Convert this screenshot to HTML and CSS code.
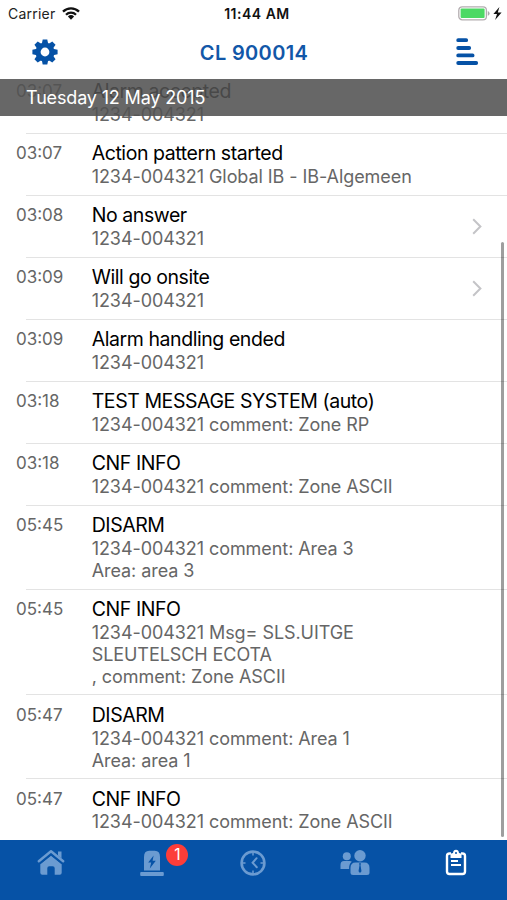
FILE: index.html
```html
<!DOCTYPE html>
<html lang="en">
<head>
<meta charset="utf-8">
<title>CL 900014</title>
<link rel="stylesheet" href="styles.css">
</head>
<body>
<header class="top">
  <div class="status">
    <div class="carrier"><span>Carrier</span>
      <svg class="wifi" width="18" height="13" viewBox="0 0 18 13"><g fill="none" stroke="#111" stroke-width="2.3"><path d="M1 4.6a11.4 11.4 0 0 1 16 0M4 7.7a7.1 7.1 0 0 1 10 0"/></g><path fill="#111" d="M9 12.8 5.9 9.5a4.6 4.6 0 0 1 6.2 0z"/></svg>
    </div>
    <div class="clock">11:44 AM</div>
    <div class="power">
      <svg width="46" height="15" viewBox="0 0 46 15"><rect x=".8" y=".8" width="27.6" height="13" rx="3.4" fill="#fff" stroke="#b3adb0" stroke-width="1.3"/><rect x="2.6" y="2.6" width="24" height="9.4" rx="1" fill="#4cd964"/><path d="M29.8 5q1.8.6 1.8 2.4t-1.8 2.4z" fill="#aaa"/><path d="M41.4 1 35.4 8h3.6l-1.9 6L43.6 6.5h-3.8z" fill="#111"/></svg>
    </div>
  </div>
  <nav class="bar">
    <svg class="gear" width="26" height="26" viewBox="-13 -13 26 26"><g fill="#0652a6"><g id="t"><path id="a" d="M-3.2-8-2.3-12.6h4.6L3.2-8v16L2.3 12.6h-4.6L-3.2 8z"/><use href="#a" transform="rotate(90)"/></g><use href="#t" transform="rotate(45)"/><circle r="9.5"/></g><circle r="4.4" fill="#fff"/></svg>
    <h1>CL 900014</h1>
    <svg class="sort" width="24" height="28" viewBox="0 0 24 28"><path d="M3.2 2.2h8M3.2 10h11M3.2 17.4h14.4M3.2 25h18" stroke="#0652a6" stroke-width="3.8" stroke-linecap="round"/></svg>
  </nav>
</header>
<main class="log">
  <h2 class="day">Tuesday 12 May 2015</h2>
  <ul class="events">
    <li><time>03:07</time><div class="entry"><h3>Alarm accepted</h3><p>1234-004321</p></div></li>
    <li><time>03:07</time><div class="entry"><h3>Action pattern started</h3><p>1234-004321 Global IB - IB-Algemeen</p></div></li>
    <li><time>03:08</time><div class="entry"><h3>No answer</h3><p>1234-004321</p></div><svg class="chevron" width="10" height="17" viewBox="0 0 10 17"><path d="m1.2 1.2 7.2 7.3-7.2 7.3"/></svg></li>
    <li><time>03:09</time><div class="entry"><h3>Will go onsite</h3><p>1234-004321</p></div><svg class="chevron" width="10" height="17" viewBox="0 0 10 17"><path d="m1.2 1.2 7.2 7.3-7.2 7.3"/></svg></li>
    <li><time>03:09</time><div class="entry"><h3>Alarm handling ended</h3><p>1234-004321</p></div></li>
    <li><time>03:18</time><div class="entry"><h3>TEST MESSAGE SYSTEM (auto)</h3><p>1234-004321 comment: Zone RP</p></div></li>
    <li><time>03:18</time><div class="entry"><h3>CNF INFO</h3><p>1234-004321 comment: Zone ASCII</p></div></li>
    <li><time>05:45</time><div class="entry"><h3>DISARM</h3><p>1234-004321 comment: Area 3<br>Area: area 3</p></div></li>
    <li><time>05:45</time><div class="entry"><h3>CNF INFO</h3><p>1234-004321 Msg= SLS.UITGE<br>SLEUTELSCH ECOTA<br>, comment: Zone ASCII</p></div></li>
    <li><time>05:47</time><div class="entry"><h3>DISARM</h3><p>1234-004321 comment: Area 1<br>Area: area 1</p></div></li>
    <li><time>05:47</time><div class="entry"><h3>CNF INFO</h3><p>1234-004321 comment: Zone ASCII</p></div></li>
  </ul>
  <div class="scrollbar"></div>
</main>
<footer class="tabs">
  <div class="tab"><svg width="30" height="28" viewBox="0 0 30 28"><path d="M2.800 13.200 15 3.200l12.200 10" fill="none" stroke="currentColor" stroke-width="2.500" stroke-linecap="round" stroke-linejoin="round"/><path fill="currentColor" d="M22 3.400h3.500v7L22 7.500zM4.300 16.200 15 7.800l10.700 8.400v8.600q0 2-2 2h-5v-6.600q0-2-2-2h-3.400q-2 0-2 2v6.600h-5q-2 0-2-2z"/><path d="M4.300 15.300 15 6.600l10.700 8.700" fill="none" stroke="#0652a6" stroke-width="1.300"/></svg></div>
  <div class="tab"><svg width="30" height="28" viewBox="0 0 30 28"><path fill="currentColor" d="M7 22.6V9q0-6.2 5.2-6.2h5.6Q23 2.8 23 9v13.6z"/><rect x="3.2" y="24" width="23.6" height="4" rx="1" fill="currentColor"/><path fill="#0652a6" d="M16.6 7.5 11.2 14.4h3l-1.4 6.2 6-7.8h-3.2z"/></svg><span class="badge">1</span></div>
  <div class="tab"><svg width="30" height="28" viewBox="0 0 30 28"><g fill="none" stroke="currentColor"><circle cx="15" cy="15" r="11.4" stroke-width="2.6"/><path stroke-width="1.5" d="M15 4v3.5M15 22.5V26M4 15h3.5M22.5 15H26"/><path stroke-width="2" stroke-linecap="round" d="m18.6 10.2-4 4.6 4.2 4.4"/></g></svg></div>
  <div class="tab"><svg width="30" height="28" viewBox="0 0 30 28"><g fill="currentColor"><circle cx="6.8" cy="8.2" r="4"/><path d="M.5 21v-4q0-4 3.5-4h5.6q1.6 0 2.2.8-3 2.2-2.7 7.2z"/><circle cx="20" cy="7.8" r="5.7"/><path d="M10.5 24.5v-4.5q0-5.5 5-5.5h9q5 0 5 5.5v4.5q0 2.5-2.5 2.500H13q-2.500 0-2.500-2.500z"/></g><path fill="#0652a6" d="M19 15.200h2l-.5 2 1 6L20 25l-1.500-1.800 1-6z"/></svg></div>
  <div class="tab active"><svg width="30" height="28" viewBox="0 0 30 28"><path d="M10 5.500H8.500Q6 5.500 6 8v15.500Q6 26 8.500 26h13q2.500 0 2.500-2.500V8q0-2.500-2.500-2.500H20" fill="none" stroke="currentColor" stroke-width="2.400"/><path fill="currentColor" d="M9.500 10V7q0-2 2.500-2 .4-3.200 3-3.200T18 5q2.500 0 2.500 2v3z"/><circle cx="15" cy="5" r="1" fill="#0652a6"/><path d="M10 13h7M10 17h10" stroke="currentColor" stroke-width="1.800"/></svg></div>
</footer>
</body>
</html>
```
FILE: styles.css
```css
* { box-sizing: border-box; }
body {
  margin: 0;
  height: 900px;
  display: flex;
  flex-direction: column;
  overflow: hidden;
  background: #fff;
  font-family: Inter, "Liberation Sans", sans-serif;
}
h1, h2, h3, p, ul { margin: 0; padding: 0; font-weight: 400; }
svg { display: block; }
.top { height: 79px; flex: none; }
.status {
  height: 27px;
  display: grid;
  grid-template-columns: 1fr auto 1fr;
  align-items: center;
  padding: 0 3px 0 8px;
  font-size: 14px;
  color: #222;
}
.carrier { display: flex; align-items: center; gap: 7px; letter-spacing: .22px; }
.clock { font-weight: 600; color: #111; font-size: 14px; letter-spacing: .5px; position: relative; left: 1px; }
.power { justify-self: end; }
.bar {
  height: 50px;
  display: grid;
  grid-template-columns: 1fr auto 1fr;
  align-items: center;
  padding: 0 32px 0 32px;
}
.bar h1 { font-size: 20px; font-weight: 600; color: #1257a8; letter-spacing: .35px; padding: 1px 0 0 1px; }
.gear { margin-left: -.5px; }
.sort { justify-self: end; margin-right: -4px; }
.log { flex: 1; min-height: 0; overflow: hidden; position: relative; }
.day {
  position: relative;
  z-index: 1;
  height: 36.5px;
  padding-left: 26px;
  background: rgba(82, 82, 82, .88);
  color: #fff;
  font-size: 18px;
  line-height: 38px;
  letter-spacing: -.16px;
}
.events { list-style: none; margin-top: -44.4px; }
.events li { display: flex; position: relative; padding: 8.35px 25px 6.85px 16px; }
.events li + li::before {
  content: "";
  position: absolute;
  top: 0;
  left: 26px;
  right: 0;
  height: 1px;
  background: #e3e3e3;
}
time { width: 75.7px; flex: none; font-size: 17px; line-height: 25px; color: #666; }
.entry { flex: 1; }
.entry h3 { font-size: 19.5px; line-height: 24px; color: #000; margin-bottom: .8px; white-space: nowrap; letter-spacing: -.43px; }
.entry p { font-size: 18px; line-height: 21.95px; color: #666; white-space: nowrap; letter-spacing: -.07px; }
.chevron { align-self: center; fill: none; stroke: #c4c4c7; stroke-width: 2; }
.scrollbar {
  position: absolute;
  right: 3px;
  top: 163px;
  bottom: 3px;
  width: 3.5px;
  border-radius: 2px;
  background: rgba(0, 0, 0, .38);
}
.tabs {
  height: 60px;
  flex: none;
  display: grid;
  grid-template-columns: repeat(5, 1fr);
  background: #0652a6;
  color: #6b9bd1;
}
.tab { position: relative; display: flex; justify-content: center; align-items: flex-start; padding-top: 8px; }
.active { color: #fff; }
.badge {
  position: absolute;
  left: 65px;
  top: 4px;
  width: 22px;
  height: 22px;
  border-radius: 50%;
  background: #fc3d39;
  color: #fff;
  font-size: 15.5px;
  line-height: 22px;
  text-align: center;
}
```
